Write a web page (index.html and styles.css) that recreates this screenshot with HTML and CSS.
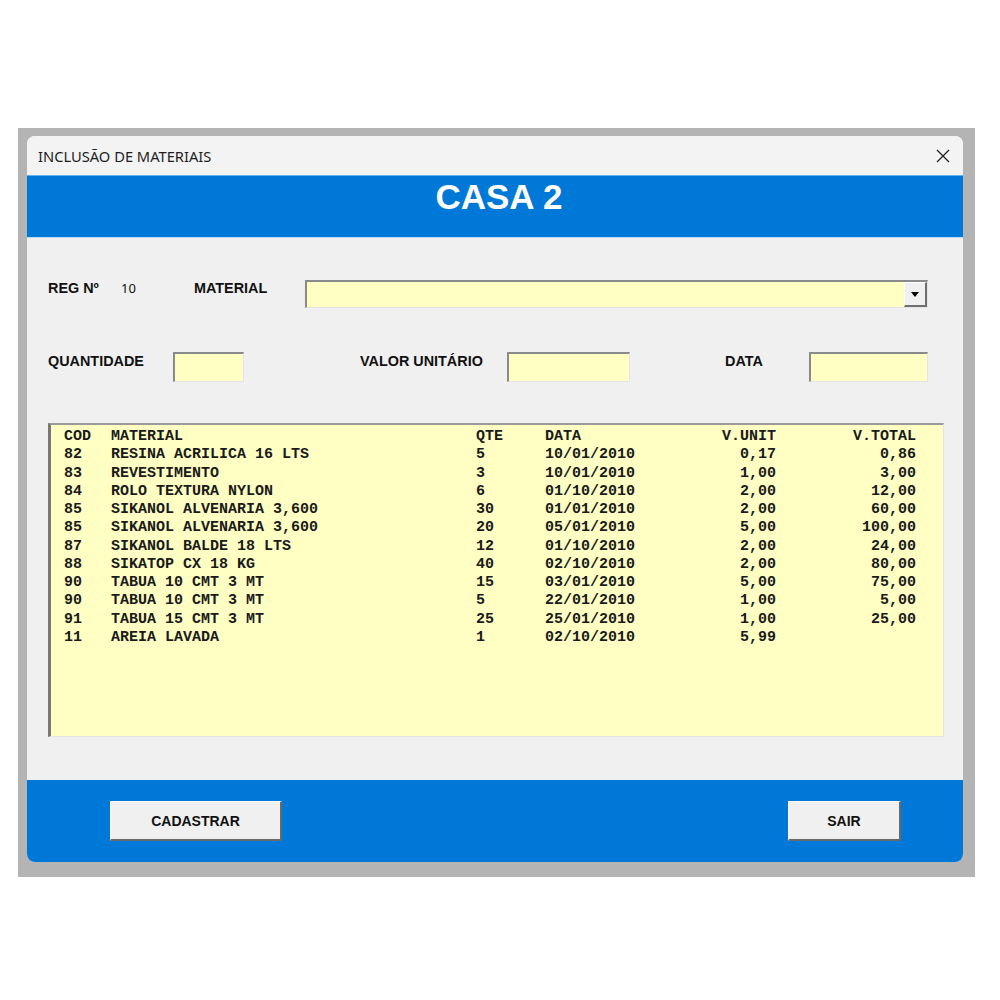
FILE: index.html
```html
<!DOCTYPE html>
<html lang="pt-BR">

<head>
	<meta charset="UTF-8">
	<meta name="viewport" content="width=device-width, initial-scale=1.0">
	<title>Inclusão de Materiais</title>
	<link rel="stylesheet" href="styles.css">
</head>

<body>
	<div class="frame">
		<div class="window">
			<div class="titlebar">
				<span class="title">INCLUSÃO DE MATERIAIS</span>
				<svg class="close" width="14" height="14" viewBox="0 0 14 14">
					<path d="M1 1 L13 13 M13 1 L1 13" stroke="#222" stroke-width="1.3" fill="none" />
				</svg>
			</div>

			<div class="header">CASA 2</div>

			<div class="form">
				<div class="row row-top">
					<div class="cell lbl w-reg">REG Nº</div>
					<div class="cell val w-num">10</div>
					<div class="cell lbl w-mat">MATERIAL</div>
					<div class="combo">
						<div class="combo-btn">
							<svg width="8" height="5" viewBox="0 0 8 5">
								<path d="M0 0 H8 L4 5 Z" fill="#000" />
							</svg>
						</div>
					</div>
				</div>

				<div class="row row-mid">
					<div class="cell lbl w-qtd">QUANTIDADE</div>
					<div class="field w-qtd-in"></div>
					<div class="cell lbl w-vu">VALOR UNITÁRIO</div>
					<div class="field w-vu-in"></div>
					<div class="cell lbl w-data">DATA</div>
					<div class="field w-data-in"></div>
				</div>

				<div class="listbox">
					<div class="list-row">
						<span>COD</span><span>MATERIAL</span><span>QTE</span><span>DATA</span><span class="num">V.UNIT</span><span class="num">V.TOTAL</span>
					</div>
					<div class="list-row">
						<span>82</span><span>RESINA ACRILICA 16 LTS</span><span>5</span><span>10/01/2010</span><span class="num">0,17</span><span class="num">0,86</span>
					</div>
					<div class="list-row">
						<span>83</span><span>REVESTIMENTO</span><span>3</span><span>10/01/2010</span><span class="num">1,00</span><span class="num">3,00</span>
					</div>
					<div class="list-row">
						<span>84</span><span>ROLO TEXTURA NYLON</span><span>6</span><span>01/10/2010</span><span class="num">2,00</span><span class="num">12,00</span>
					</div>
					<div class="list-row">
						<span>85</span><span>SIKANOL ALVENARIA 3,600</span><span>30</span><span>01/01/2010</span><span class="num">2,00</span><span class="num">60,00</span>
					</div>
					<div class="list-row">
						<span>85</span><span>SIKANOL ALVENARIA 3,600</span><span>20</span><span>05/01/2010</span><span class="num">5,00</span><span class="num">100,00</span>
					</div>
					<div class="list-row">
						<span>87</span><span>SIKANOL BALDE 18 LTS</span><span>12</span><span>01/10/2010</span><span class="num">2,00</span><span class="num">24,00</span>
					</div>
					<div class="list-row">
						<span>88</span><span>SIKATOP CX 18 KG</span><span>40</span><span>02/10/2010</span><span class="num">2,00</span><span class="num">80,00</span>
					</div>
					<div class="list-row">
						<span>90</span><span>TABUA 10 CMT 3 MT</span><span>15</span><span>03/01/2010</span><span class="num">5,00</span><span class="num">75,00</span>
					</div>
					<div class="list-row">
						<span>90</span><span>TABUA 10 CMT 3 MT</span><span>5</span><span>22/01/2010</span><span class="num">1,00</span><span class="num">5,00</span>
					</div>
					<div class="list-row">
						<span>91</span><span>TABUA 15 CMT 3 MT</span><span>25</span><span>25/01/2010</span><span class="num">1,00</span><span class="num">25,00</span>
					</div>
					<div class="list-row">
						<span>11</span><span>AREIA LAVADA</span><span>1</span><span>02/10/2010</span><span class="num">5,99</span><span class="num"></span>
					</div>
				</div>
			</div>

			<div class="footer">
				<button class="btn btn-cad">CADASTRAR</button>
				<button class="btn btn-sair">SAIR</button>
			</div>
		</div>
	</div>
</body>

</html>
```

FILE: styles.css
```css
body {
	margin: 0;
	padding: 128px 0 0 18px;
	background: #ffffff;
	font-family: "Liberation Sans", Arial, sans-serif;
}

.frame {
	width: 936px;
	padding: 8px 12px 15px 9px;
	background: #b4b4b4;
}

.window {
	width: 936px;
	border-radius: 8px;
	overflow: hidden;
	background: #f0f0f0;
}

.titlebar {
	height: 39px;
	background: #f3f3f3;
	display: flex;
	align-items: center;
	justify-content: space-between;
	padding: 0 13px 0 11px;
}

.title {
	font-family: "Noto Sans", sans-serif;
	font-size: 14.7px;
	color: #1e1e1e;
}

.close {
	margin-top: 1px;
}

.header {
	height: 61px;
	border-top: 1px solid #5fb2f0;
	background: #0078d7;
	color: #ffffff;
	font-size: 35px;
	font-weight: bold;
	text-align: center;
	line-height: 42px;
	padding-left: 8px;
}

.form {
	height: 543px;
	padding-left: 21px;
	box-sizing: border-box;
	border-top: 1px solid #bcdcf5;
}

.row {
	display: flex;
	align-items: flex-start;
}

.row-top {
	padding-top: 42px;
}

.row-mid {
	padding-top: 44px;
}

.cell {
	line-height: 16px;
	font-size: 14.4px;
	color: #111;
	flex: none;
}

.lbl {
	font-weight: bold;
}

.val {
	font-size: 13px;
	font-family: "Noto Sans", sans-serif;
}

.row-mid .cell {
	margin-top: 1px;
}

.w-reg { width: 73px; }
.w-num { width: 73px; }
.w-mat { width: 111px; }
.w-qtd { width: 125px; }
.w-vu { width: 147px; margin-left: 116px; }
.w-data { width: 84px; margin-left: 95px; }

.combo,
.field,
.listbox {
	box-sizing: border-box;
	background: #ffffc4;
	border-top: 2px solid #8a8a8a;
	border-left: 2px solid #8a8a8a;
	border-right: 1px solid #e4e4e4;
	border-bottom: 1px solid #e4e4e4;
	flex: none;
}

.combo {
	width: 623px;
	height: 28px;
	display: flex;
	justify-content: flex-end;
}

.combo-btn {
	width: 23px;
	height: 25px;
	box-sizing: border-box;
	background: #f0f0f0;
	border-top: 1px solid #ffffff;
	border-left: 1px solid #ffffff;
	border-right: 2px solid #6f6f6f;
	border-bottom: 2px solid #6f6f6f;
	display: flex;
	align-items: center;
	justify-content: center;
}

.field {
	height: 30px;
}

.w-qtd-in { width: 71px; }
.w-vu-in { width: 123px; }
.w-data-in { width: 119px; }

.listbox {
	margin-top: 41px;
	width: 896px;
	height: 314px;
	padding-top: 3px;
	padding-left: 13px;
	border-top: 2px solid #9a9a9a;
	border-left: 3px solid #777;
}

.list-row {
	display: grid;
	grid-template-columns: 47px 365px 69px 100px 131px 140px;
	font-family: "Liberation Mono", "Courier New", monospace;
	font-weight: bold;
	font-size: 15px;
	line-height: 18.27px;
	color: #1a1a1a;
	white-space: pre;
}

.list-row .num {
	text-align: right;
}

.footer {
	height: 82px;
	background: #0078d7;
	display: flex;
	align-items: flex-start;
	justify-content: space-between;
	padding: 21px 62px 0 83px;
	box-sizing: border-box;
}

.btn {
	height: 40px;
	background: #f0f0f0;
	border: none;
	border-top: 1px solid #ffffff;
	border-left: 1px solid #ffffff;
	border-right: 2px solid #696969;
	border-bottom: 2px solid #696969;
	font-family: "Liberation Sans", Arial, sans-serif;
	font-size: 14px;
	font-weight: bold;
	color: #111;
	padding: 0;
	cursor: pointer;
}

.btn-cad { width: 172px; }
.btn-sair { width: 113px; }
```
